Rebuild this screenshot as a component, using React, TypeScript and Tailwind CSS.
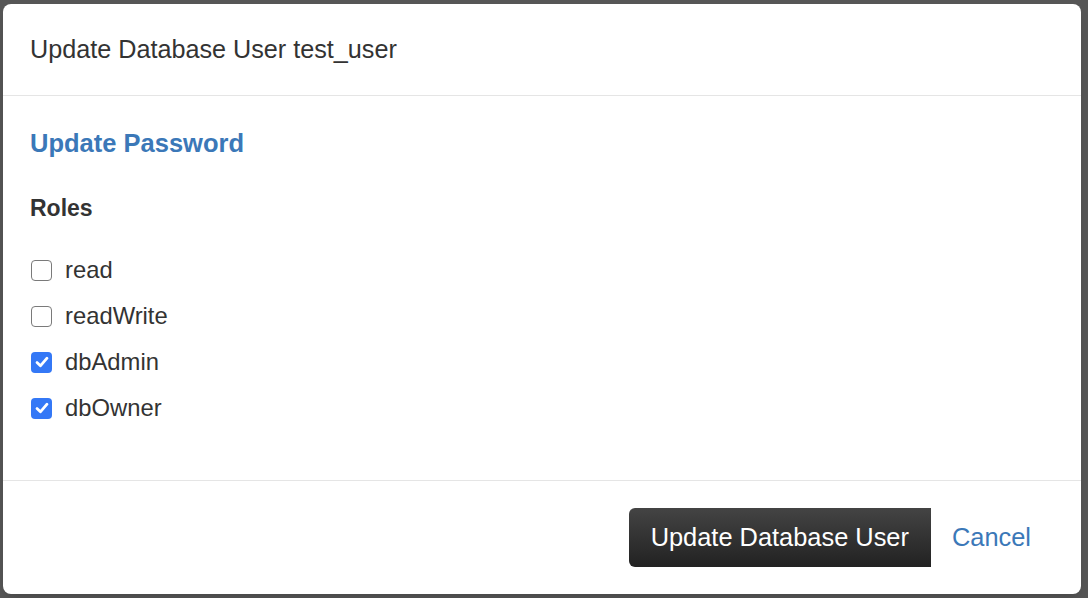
import React from "react";

const roles = [
  { name: "read", checked: false },
  { name: "readWrite", checked: false },
  { name: "dbAdmin", checked: true },
  { name: "dbOwner", checked: true },
];

const Checkbox = ({ checked }: { checked: boolean }) => {
  if (checked) {
    return (
      <span className="flex h-[21px] w-[21px] items-center justify-center rounded-[4px] bg-[#3478f6]">
        <svg width="16" height="16" viewBox="0 0 16 16" fill="none">
          <path d="M3 8.6 L6.4 11.8 L13 4.2" stroke="white" strokeWidth="2.8" strokeLinecap="round" strokeLinejoin="round" />
        </svg>
      </span>
    );
  }
  return <span className="block h-[21px] w-[21px] rounded-[4px] border-[1.5px] border-[#7a7a7a] bg-white" />;
};

const App = () => {
  return (
    <div className="h-[598px] w-full bg-[#565656] pl-[3px] pr-[7px] pt-[4px] pb-[4px]" style={{ fontFamily: '"Liberation Sans", Arial, Helvetica, sans-serif' }}>
      <div className="flex h-[590px] flex-col overflow-hidden rounded-[8px] bg-white shadow-lg">
        {/* HEADER */}
        <div className="border-b border-[#e5e5e5] px-[27px] pt-[29px] pb-[30px]">
          <h1 className="text-[25.2px] leading-[32px] text-[#333333]">Update Database User test_user</h1>
        </div>

        {/* BODY */}
        <div className="px-[27px] pt-[31px] pb-[49px]">
          <p className="text-[25.5px] font-bold leading-[32px] text-[#3b78b8]">Update Password</p>
          <p className="mt-[34px] text-[23px] font-bold leading-[30px] text-[#333333]">Roles</p>
          <ul className="mt-[24px]">
            {roles.map((role) => (
              <li key={role.name} className="flex h-[46px] items-center">
                <span className="ml-[1px]">
                  <Checkbox checked={role.checked} />
                </span>
                <span className="ml-[13px] text-[23.8px] leading-[46px] text-[#333333]">{role.name}</span>
              </li>
            ))}
          </ul>
        </div>

        {/* FOOTER */}
        <div className="flex h-[113px] items-center justify-end border-t border-[#e5e5e5] pr-[50px]">
          <button className="flex h-[59px] items-center rounded-l-[6px] bg-gradient-to-b from-[#444444] to-[#222222] px-[22px] text-[25.4px] text-white">
            Update Database User
          </button>
          <span className="ml-[21px] text-[25.4px] text-[#3b78b8]">Cancel</span>
        </div>
      </div>
    </div>
  );
};

export default App;
